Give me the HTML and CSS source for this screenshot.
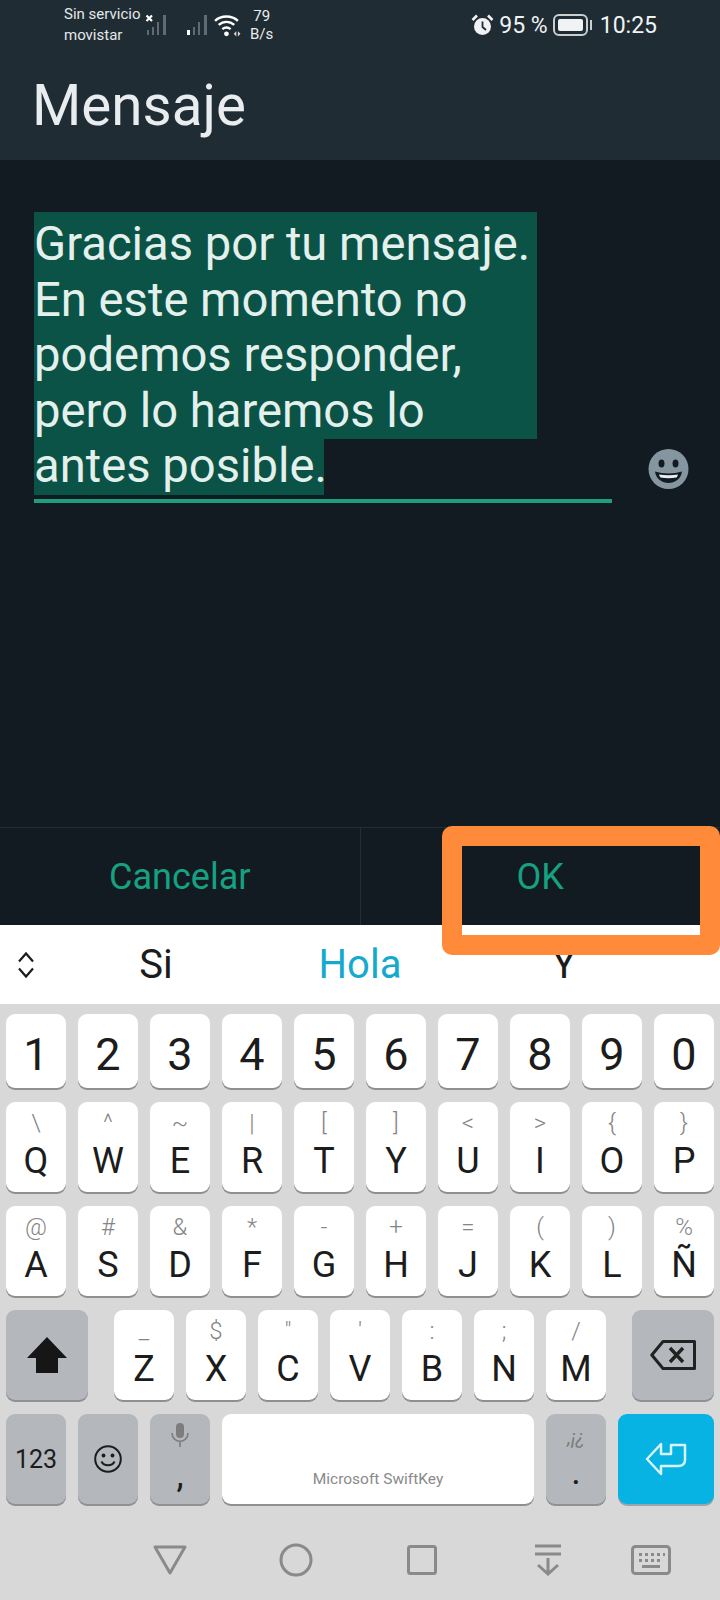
FILE: index.html
```html
<!DOCTYPE html>
<html lang="es">
  <head>
    <meta charset="utf-8">
    <title>Mensaje</title>
    <link rel="stylesheet" href="styles.css">
  </head>
  <body>
    <div class="screen">
      <!-- Status bar and title -->
      <div class="top">
        <div class="status-bar">
          <div class="status-left">
            <div class="carrier">
              <span>Sin servicio</span>
              <span>movistar</span>
            </div>
            <svg class="signal-x" width="23" height="22" viewBox="0 0 23 22">
              <path d="M1.5 1.5L7 7M7 1.5L1.5 7" stroke="#fff" stroke-width="2.2" fill="none"/>
              <path d="M2 16h2v5H2zM7 13h2v8H7zM12 8h2v13h-2zM18 1h3v20h-3z" fill="#5f6b71"/>
            </svg>
            <svg class="signal" width="22" height="22" viewBox="0 0 22 22">
              <path d="M1 16h3v5H1z" fill="#fff"/>
              <path d="M7 13h2v8H7zM12 8h2v13h-2zM18 1h3v20h-3z" fill="#5f6b71"/>
            </svg>
            <svg class="wifi" width="27" height="23" viewBox="0 0 26 22">
              <path d="M1 6.5C7 1 17 1 23 6.5M4.5 10.5C9 6.5 15 6.5 19.5 10.5M8 14.5C10.5 12.5 13.5 12.5 16 14.5" stroke="#fff" stroke-width="2.3" fill="none"/>
              <circle cx="12" cy="19" r="2.3" fill="#fff"/>
              <path d="M19 19l2.5-2.5v5zM23 16.5l2.5 2.5-2.5 2.5z" fill="#d5d9db"/>
            </svg>
            <div class="speed">
              <span>79</span>
              <span>B/s</span>
            </div>
          </div>
          <div class="status-right">
            <svg width="23" height="22" viewBox="0 0 23 22">
              <circle cx="11.5" cy="12.5" r="8.5" fill="#f0f2f3"/>
              <path d="M11.5 7.5v5.5l3.5 3" stroke="#202c33" stroke-width="1.8" fill="none"/>
              <path d="M1.5 6L6 1.5M21.5 6L17 1.5" stroke="#f0f2f3" stroke-width="2.6" fill="none"/>
            </svg>
            <span class="battery-text">95 %</span>
            <div class="battery">
              <div class="battery-fill"></div>
            </div>
            <div class="battery-nub"></div>
            <span class="clock">10:25</span>
          </div>
        </div>
        <h1 class="title">Mensaje</h1>
      </div>

      <!-- Message field -->
      <div class="body">
        <div class="field">
          <div class="message">
            <span class="sel-line">Gracias por tu mensaje.</span>
            <span class="sel-line">En este momento no</span>
            <span class="sel-line">podemos responder,</span>
            <span class="sel-line">pero lo haremos lo</span>
            <span class="sel-line sel-last">antes posible.</span>
          </div>
        </div>
        <svg class="field-emoji" width="41" height="40" viewBox="0 0 41 40">
          <circle cx="20.5" cy="20" r="20" fill="#8696a0"/>
          <ellipse cx="13.5" cy="14.5" rx="3" ry="4" fill="#121b22"/>
          <ellipse cx="27.5" cy="14.5" rx="3" ry="4" fill="#121b22"/>
          <path d="M7 22.5C15 25 26 25 34 22.5C33 30 27 34 20.5 34C14 34 8 30 7 22.5Z" fill="#121b22"/>
          <path d="M11 25.5C17 26.6 24 26.6 30 25.5C29.5 27 29 28 28.5 28.5C23 29.4 18 29.4 12.5 28.5C12 28 11.5 27 11 25.5Z" fill="#e9edef"/>
        </svg>
      </div>

      <div class="actions">
        <div class="action">Cancelar</div>
        <div class="action">OK</div>
      </div>

      <!-- Suggestions -->
      <div class="suggestions">
        <div class="sug-toggle">
          <svg width="18" height="28" viewBox="0 0 18 28">
            <path d="M2 10.5L9 2.5L16 10.5M2 17.5L9 25.5L16 17.5" stroke="#1c1c1c" stroke-width="2.2" fill="none"/>
          </svg>
        </div>
        <div class="sug">Si</div>
        <div class="sug sug-main">Hola</div>
        <div class="sug">Y</div>
      </div>

      <!-- Keyboard -->
      <div class="keyboard">
        <div class="row row-numbers">
          <div class="key">1</div>
          <div class="key">2</div>
          <div class="key">3</div>
          <div class="key">4</div>
          <div class="key">5</div>
          <div class="key">6</div>
          <div class="key">7</div>
          <div class="key">8</div>
          <div class="key">9</div>
          <div class="key">0</div>
        </div>

        <div class="row">
          <div class="key"><span class="hint">\</span><span class="letter">Q</span></div>
          <div class="key"><span class="hint">^</span><span class="letter">W</span></div>
          <div class="key"><span class="hint">~</span><span class="letter">E</span></div>
          <div class="key"><span class="hint">|</span><span class="letter">R</span></div>
          <div class="key"><span class="hint">[</span><span class="letter">T</span></div>
          <div class="key"><span class="hint">]</span><span class="letter">Y</span></div>
          <div class="key"><span class="hint">&lt;</span><span class="letter">U</span></div>
          <div class="key"><span class="hint">&gt;</span><span class="letter">I</span></div>
          <div class="key"><span class="hint">{</span><span class="letter">O</span></div>
          <div class="key"><span class="hint">}</span><span class="letter">P</span></div>
        </div>

        <div class="row">
          <div class="key"><span class="hint">@</span><span class="letter">A</span></div>
          <div class="key"><span class="hint">#</span><span class="letter">S</span></div>
          <div class="key"><span class="hint">&amp;</span><span class="letter">D</span></div>
          <div class="key"><span class="hint">*</span><span class="letter">F</span></div>
          <div class="key"><span class="hint">-</span><span class="letter">G</span></div>
          <div class="key"><span class="hint">+</span><span class="letter">H</span></div>
          <div class="key"><span class="hint">=</span><span class="letter">J</span></div>
          <div class="key"><span class="hint">(</span><span class="letter">K</span></div>
          <div class="key"><span class="hint">)</span><span class="letter">L</span></div>
          <div class="key"><span class="hint">%</span><span class="letter">Ñ</span></div>
        </div>

        <div class="row">
          <div class="key key-dark key-wide">
            <svg width="40" height="36" viewBox="0 0 40 36">
              <path d="M20 0L40 21H31V36H9V21H0Z" fill="#161616"/>
            </svg>
          </div>
          <div class="key key-after-shift"><span class="hint">_</span><span class="letter">Z</span></div>
          <div class="key"><span class="hint">$</span><span class="letter">X</span></div>
          <div class="key"><span class="hint">"</span><span class="letter">C</span></div>
          <div class="key"><span class="hint">'</span><span class="letter">V</span></div>
          <div class="key"><span class="hint">:</span><span class="letter">B</span></div>
          <div class="key"><span class="hint">;</span><span class="letter">N</span></div>
          <div class="key"><span class="hint">/</span><span class="letter">M</span></div>
          <div class="key key-dark key-wide key-before-back">
            <svg width="46" height="30" viewBox="0 0 46 30">
              <path d="M13 1.5H44.5V28.5H13L1.8 15Z" stroke="#222" stroke-width="3" stroke-linejoin="round" fill="none"/>
              <path d="M20 8L33 22M33 8L20 22" stroke="#222" stroke-width="3.4" fill="none"/>
            </svg>
          </div>
        </div>

        <div class="row">
          <div class="key key-dark key-label">123</div>
          <div class="key key-dark">
            <svg width="28" height="28" viewBox="0 0 28 28">
              <circle cx="14" cy="14" r="12.8" stroke="#1c1c1c" stroke-width="2" fill="none"/>
              <circle cx="9.5" cy="10.5" r="1.9" fill="#1c1c1c"/>
              <circle cx="18.5" cy="10.5" r="1.9" fill="#1c1c1c"/>
              <path d="M7.5 16.5C10 21.5 18 21.5 20.5 16.5" stroke="#1c1c1c" stroke-width="2" fill="none"/>
            </svg>
          </div>
          <div class="key key-dark key-stack">
            <svg class="mic" width="18" height="24" viewBox="0 0 18 24">
              <rect x="5" y="0" width="8" height="15" rx="4" fill="#7d7d7d"/>
              <path d="M1 10C1 21 17 21 17 10M9 18V24" stroke="#7d7d7d" stroke-width="1.6" fill="none"/>
            </svg>
            <span class="punct">,</span>
          </div>
          <div class="key key-space">Microsoft SwiftKey</div>
          <div class="key key-dark key-stack">
            <span class="punct-hint">,¡¿</span>
            <span class="punct">.</span>
          </div>
          <div class="key key-enter">
            <svg width="42" height="34" viewBox="0 0 42 34">
              <path d="M16 2L2 17L16 32V24H33C38 24 40 22 40 18V3H26V12H16Z" stroke="#d9f3fb" stroke-width="2.5" stroke-linejoin="round" fill="none"/>
            </svg>
          </div>
        </div>

        <!-- Navigation bar -->
        <div class="nav">
          <svg width="34" height="30" viewBox="0 0 34 30">
            <path d="M2 2H32L17 28Z" stroke="#8a8a8a" stroke-width="3" stroke-linejoin="round" fill="none"/>
          </svg>
          <svg width="34" height="34" viewBox="0 0 34 34">
            <circle cx="17" cy="17" r="15" stroke="#8a8a8a" stroke-width="3" fill="none"/>
          </svg>
          <svg width="30" height="30" viewBox="0 0 30 30">
            <rect x="1.5" y="1.5" width="27" height="27" rx="2" stroke="#8a8a8a" stroke-width="3" fill="none"/>
          </svg>
          <svg width="28" height="32" viewBox="0 0 28 32">
            <path d="M1 2H27M1 10H27M14 14V30M4 21L14 30L24 21" stroke="#8a8a8a" stroke-width="3" fill="none"/>
          </svg>
          <svg width="40" height="30" viewBox="0 0 40 30">
            <rect x="1.5" y="1.5" width="37" height="27" rx="3" stroke="#8a8a8a" stroke-width="3" fill="none"/>
            <path d="M8 8h3v3H8zM14 8h3v3h-3zM20 8h3v3h-3zM26 8h3v3h-3zM32 8h2v3h-2zM8 14h3v3H8zM14 14h3v3h-3zM20 14h3v3h-3zM26 14h3v3h-3zM11 20h18v3H11z" fill="#8a8a8a"/>
          </svg>
        </div>
      </div>

      <!-- Orange annotation on top of the screenshot -->
      <div class="highlight-box"></div>
    </div>
  </body>
</html>
```

FILE: styles.css
```css
* {
  box-sizing: border-box;
  margin: 0;
  padding: 0;
}

body {
  background: #121b22;
  font-family: 'Roboto', sans-serif;
}

.screen {
  position: relative;
  display: flex;
  flex-direction: column;
  width: 720px;
  height: 1600px;
  overflow: hidden;
}

/* Top area */
.top {
  height: 160px;
  background: #202c33;
  color: #e9edef;
}

.status-bar {
  display: flex;
  justify-content: space-between;
  align-items: center;
  height: 50px;
  padding: 0 63px 0 64px;
}

.status-left,
.status-right {
  display: flex;
  align-items: center;
}

.carrier {
  display: flex;
  flex-direction: column;
  width: 81px;
  font-size: 15px;
  line-height: 21px;
  color: #e4e8ea;
}

.signal {
  margin-left: 18px;
}

.wifi {
  margin-left: 6px;
}

.speed {
  display: flex;
  flex-direction: column;
  align-items: center;
  margin-left: 9px;
  margin-top: -1px;
  font-size: 15px;
  line-height: 18px;
  color: #e9edef;
}

.status-right {
  font-size: 23px;
  color: #f0f2f3;
}

.battery-text {
  margin-left: 5px;
}

.battery {
  width: 35px;
  height: 22px;
  margin-left: 5px;
  padding: 3px;
  border: 2px solid #c9ced1;
  border-radius: 6px;
}

.battery-fill {
  height: 100%;
  background: #f0f2f3;
  border-radius: 2px;
}

.battery-nub {
  width: 2px;
  height: 10px;
  margin-left: 2px;
  background: #c9ced1;
}

.clock {
  margin-left: 8px;
}

.title {
  padding-left: 32px;
  font-size: 56.5px;
  font-weight: 400;
  line-height: 112px;
  color: #e9edef;
}

/* Message */
.body {
  display: flex;
  flex: none;
  height: 667px;
  padding: 52px 0 0 34px;
  background: #121b22;
}

.field {
  align-self: flex-start;
  width: 578px;
  padding-bottom: 4px;
  border-bottom: 4px solid #1f9e7f;
}

.message {
  font-size: 47.2px;
  line-height: 55.6px;
  color: #e3f0ec;
}

.sel-line {
  display: block;
  width: 503px;
  height: 55.6px;
  white-space: nowrap;
  background: #0b5347;
}

.sel-line:first-child {
  height: 60.6px;
  padding-top: 5px;
}

.sel-last {
  width: 290px;
}

.field-emoji {
  margin: 237px 0 0 36px;
}

.actions {
  display: flex;
  flex: none;
  height: 98px;
  background: #121b22;
  border-top: 1px solid #222d34;
}

.action {
  display: flex;
  align-items: center;
  justify-content: center;
  flex: 1;
  font-size: 36px;
  color: #16a180;
}

.action:first-child {
  border-right: 1px solid #222d34;
}

/* Suggestion bar */
.suggestions {
  display: flex;
  flex: none;
  align-items: center;
  height: 79px;
  padding-right: 54px;
  background: #fff;
}

.sug-toggle {
  display: flex;
  align-items: center;
  width: 54px;
  padding-left: 17px;
}

.sug {
  flex: 1;
  font-size: 40px;
  text-align: center;
  color: #1c1c1c;
}

.sug-main {
  color: #14aacf;
}

/* Keyboard */
.keyboard {
  display: flex;
  flex-direction: column;
  flex: none;
  gap: 14px;
  height: 596px;
  padding: 10px 6px 0;
  background: #d8d8d8;
}

.row {
  display: flex;
  flex: none;
  gap: 12px;
  height: 90px;
}

.row-numbers {
  height: 74px;
}

.key {
  display: flex;
  flex-direction: column;
  align-items: center;
  justify-content: center;
  width: 60px;
  background: #fff;
  border-radius: 9px;
  box-shadow: 0 2px 0 #8f8f8f;
  font-size: 45px;
  color: #1c1c1c;
}

.row-numbers .key {
  padding-top: 6px;
}

.hint {
  height: 28px;
  font-size: 24px;
  font-weight: 300;
  line-height: 28px;
  color: #858585;
}

.letter {
  height: 48px;
  font-size: 36px;
  line-height: 48px;
}

.key-dark {
  background: #b4b7bb;
  box-shadow: 0 2px 0 #8f9195;
}

.key-wide {
  width: 82px;
}

.key-after-shift,
.key-before-back {
  margin-left: 14px;
}

.key-label {
  font-size: 25px;
}

.key-stack {
  justify-content: flex-start;
}

.mic {
  margin-top: 9px;
}

.punct {
  height: 42px;
  margin-top: 7px;
  font-size: 36px;
  line-height: 42px;
}

.punct-hint {
  height: 33px;
  margin-top: 7px;
  font-size: 20px;
  font-style: italic;
  line-height: 33px;
  color: #7d7d7d;
}

.punct-hint + .punct {
  margin-top: -3px;
}

.key-space {
  justify-content: flex-end;
  width: 312px;
  padding-bottom: 16px;
  font-size: 15.5px;
  color: #8a8a8a;
}

.key-enter {
  width: 96px;
  background: #06b3e3;
  box-shadow: 0 2px 0 #9aa6ab;
}

.nav {
  display: grid;
  grid-template-columns: 126px 126px 126px 126px 80px;
  justify-items: center;
  align-items: center;
  flex: none;
  height: 82px;
  padding: 2px 0 0 101px;
}

.highlight-box {
  position: absolute;
  top: 826px;
  left: 442px;
  width: 278px;
  height: 129px;
  border: 20px solid #ff8a3a;
  border-radius: 10px;
}
```
